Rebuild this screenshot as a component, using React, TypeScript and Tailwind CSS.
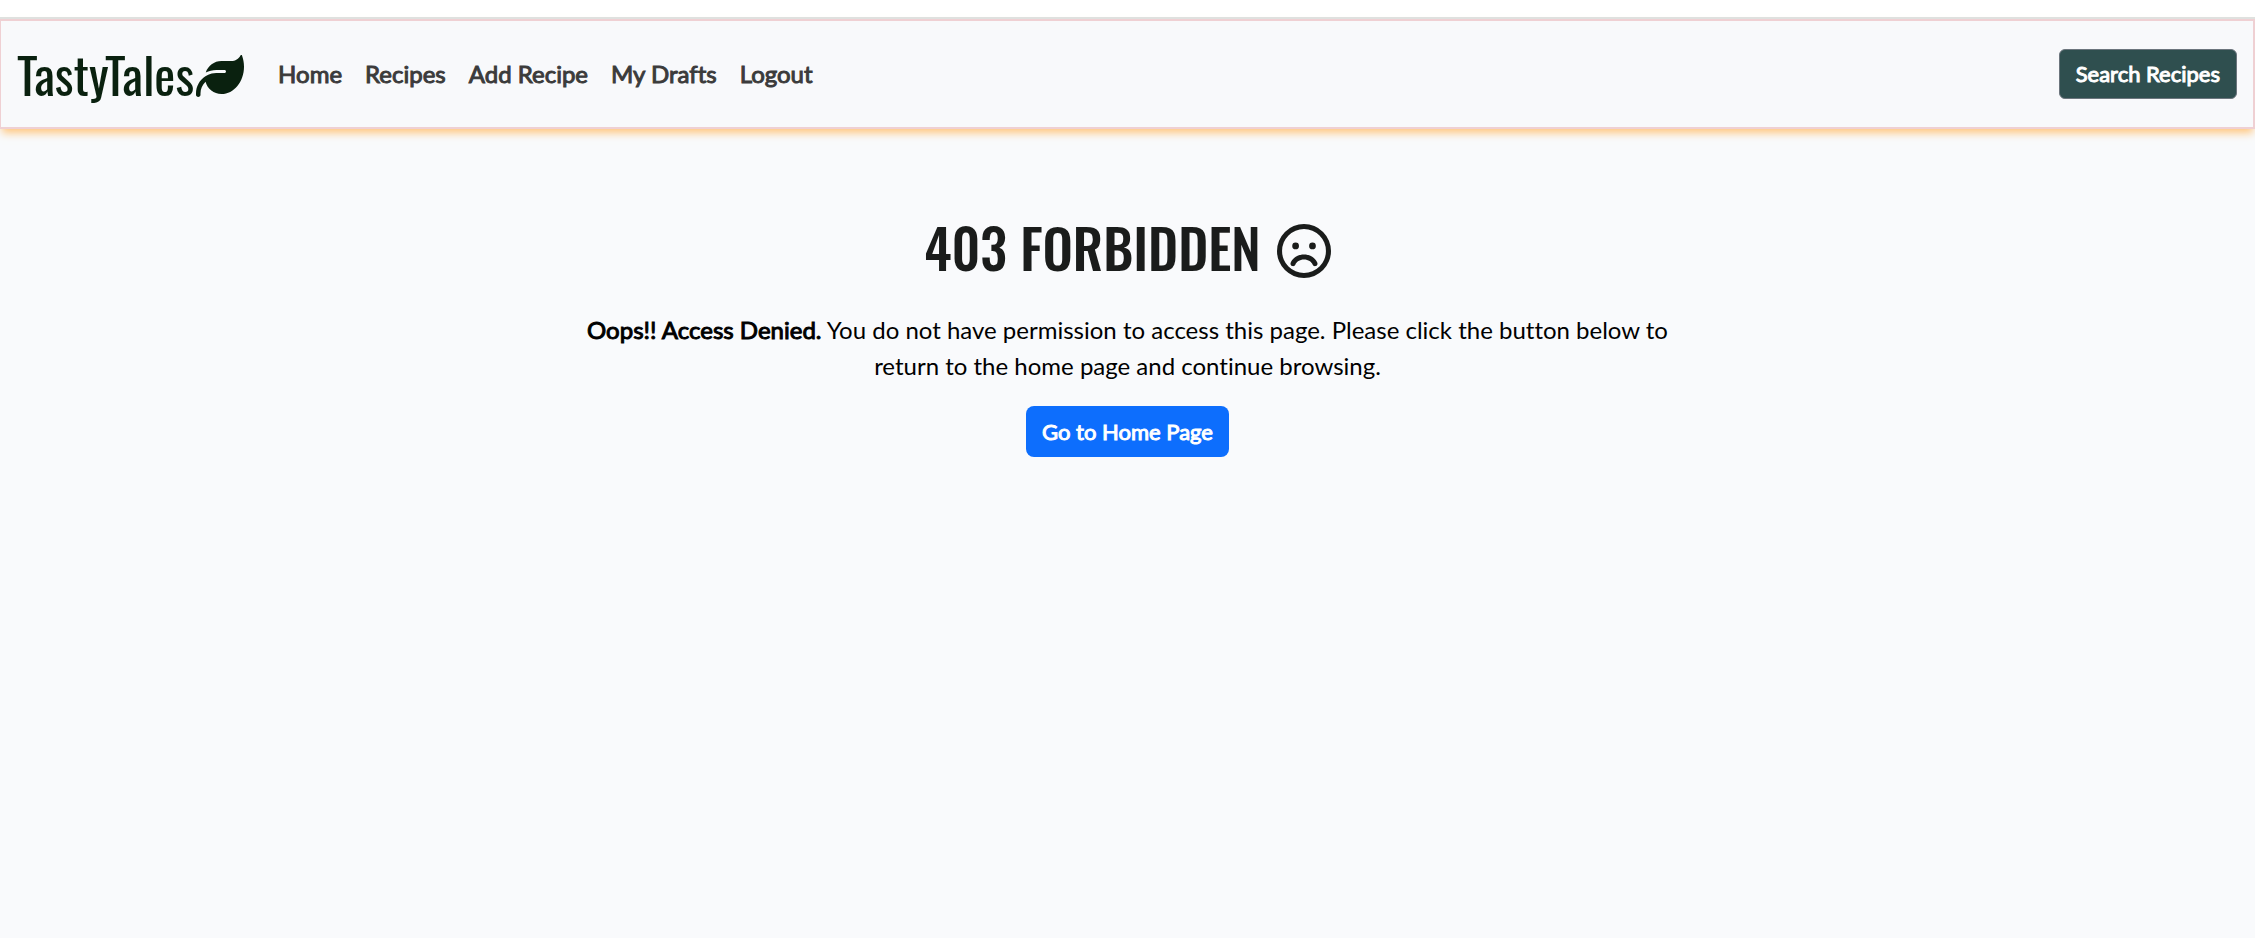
import { FaLeaf, FaRegFaceFrown } from "react-icons/fa6";

const links = ["Home", "Recipes", "Add Recipe", "My Drafts", "Logout"];

export default function App() {
  return (
    <div className="flex min-h-screen flex-col bg-[#f9fafc] font-['Lato',sans-serif] text-2xl leading-9 text-black [font-variant-ligatures:none]">
      <header className="bg-white pt-[17px]">
        <nav className="border-t-2 border-[#dfe1df] shadow-[0_6px_8px_-2px_#ffc77f]">
          <div className="flex items-center border-2 border-l border-[#efd0d3] bg-[#f8f9fb] px-4 py-4">
            <a
              href="#"
              className="mr-[34px] flex h-[74px] items-center gap-0.5 pb-0.5 font-['Oswald',sans-serif] text-[50px] leading-none text-[#0a210f]"
            >
              TastyTales
              <FaLeaf className="mt-1.5 h-12 w-12" />
            </a>
            <ul className="flex gap-[23px] text-[#3b3b3b] [-webkit-text-stroke:1px_#3b3b3b]">
              {links.map((label) => (
                <li key={label}>
                  <a href="#">{label}</a>
                </li>
              ))}
            </ul>
            <button
              type="button"
              className="ml-auto h-[50px] rounded-md border border-[#6c757d] bg-[#2f4f4f] px-4 text-[22px] text-white [-webkit-text-stroke:1px_white]"
            >
              Search Recipes
            </button>
          </div>
        </nav>
      </header>
      <main className="mx-auto flex w-full max-w-[1140px] flex-col items-center px-4 pt-[81px] text-center">
        <h1 className="flex items-end gap-4 font-['Oswald',sans-serif] text-[54px] font-medium leading-[74px] text-[#1a1c1b]">
          403 FORBIDDEN
          <FaRegFaceFrown className="mb-1.5 h-[54px] w-[54px]" />
        </h1>
        <p className="mt-7">
          <strong className="font-normal [-webkit-text-stroke:1px_black]">Oops!! Access Denied.</strong> You do not have
          permission to access this page. Please click the button below to return to the home page and continue browsing.
        </p>
        <a
          href="#"
          className="mt-[22px] flex h-[51px] items-center rounded-lg bg-[#0d6efd] px-4 text-[22px] text-white [-webkit-text-stroke:1px_white]"
        >
          Go to Home Page
        </a>
      </main>
    </div>
  );
}
